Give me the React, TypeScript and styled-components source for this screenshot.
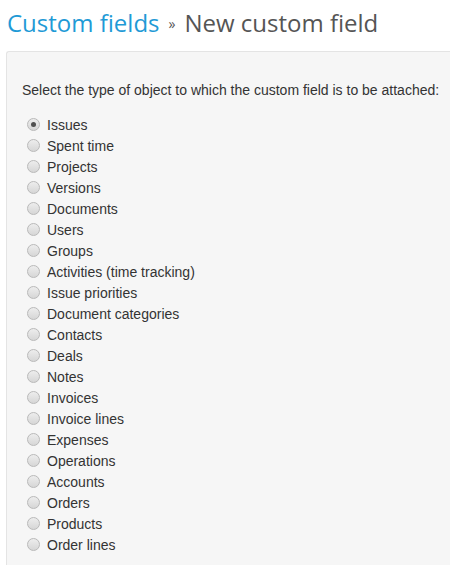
import React, { useState } from 'react';
import styled, { createGlobalStyle } from 'styled-components';

const GlobalStyle = createGlobalStyle`
  body {
    margin: 0;
    background: #fff;
    font-family: "Liberation Sans", Arial, sans-serif;
    color: #333;
  }
`;

const Page = styled.div`
  padding: 5px 0 0 6px;
  overflow: hidden;
  height: 565px;
  box-sizing: border-box;
`;

const Title = styled.h2`
  margin: 0 0 9px 1px;
  font-family: "Open Sans", sans-serif;
  font-size: 24px;
  font-weight: normal;
  color: #555;
  line-height: 36px;
  white-space: nowrap;
`;

const TitleLink = styled.a`
  color: #1f9ad6;
  text-decoration: none;
`;

const Sep = styled.span`
  font-size: 14px;
  margin: 0 9px 0 9px;
  vertical-align: 3px;
`;

const Box = styled.div`
  background: #f6f6f6;
  border: 1px solid #e4e4e4;
  border-right: none;
  border-radius: 3px 0 0 3px;
  padding: 30px 0 20px 15px;
  margin-right: -20px;
`;

const Intro = styled.p`
  margin: 0 0 16px;
  font-size: 14px;
  white-space: nowrap;
`;

const Option = styled.label`
  display: flex;
  align-items: center;
  gap: 7px;
  height: 21px;
  font-size: 14px;
  color: #333;
  padding-left: 5px;
`;

const Radio = styled.input`
  appearance: none;
  box-sizing: border-box;
  width: 13px;
  height: 13px;
  margin: 0;
  border-radius: 50%;
  border: 1px solid #b9b9b9;
  background: linear-gradient(#ededed, #d6d6d6);
  display: grid;
  place-items: center;

  &:checked::after {
    content: '';
    width: 5px;
    height: 5px;
    border-radius: 50%;
    background: #505050;
  }
`;

const types = [
  'Issues',
  'Spent time',
  'Projects',
  'Versions',
  'Documents',
  'Users',
  'Groups',
  'Activities (time tracking)',
  'Issue priorities',
  'Document categories',
  'Contacts',
  'Deals',
  'Notes',
  'Invoices',
  'Invoice lines',
  'Expenses',
  'Operations',
  'Accounts',
  'Orders',
  'Products',
  'Order lines',
];

const App: React.FC = () => {
  const [selected, setSelected] = useState('Issues');

  return (
    <Page>
      <GlobalStyle />
      <Title>
        <TitleLink href="#">Custom fields</TitleLink>
        <Sep>»</Sep>
        New custom field
      </Title>
      <Box>
        <Intro>Select the type of object to which the custom field is to be attached:</Intro>
        {types.map(t => (
          <Option key={t}>
            <Radio
              type="radio"
              name="type"
              checked={selected === t}
              onChange={() => setSelected(t)}
            />
            {t}
          </Option>
        ))}
      </Box>
    </Page>
  );
};

export default App;
